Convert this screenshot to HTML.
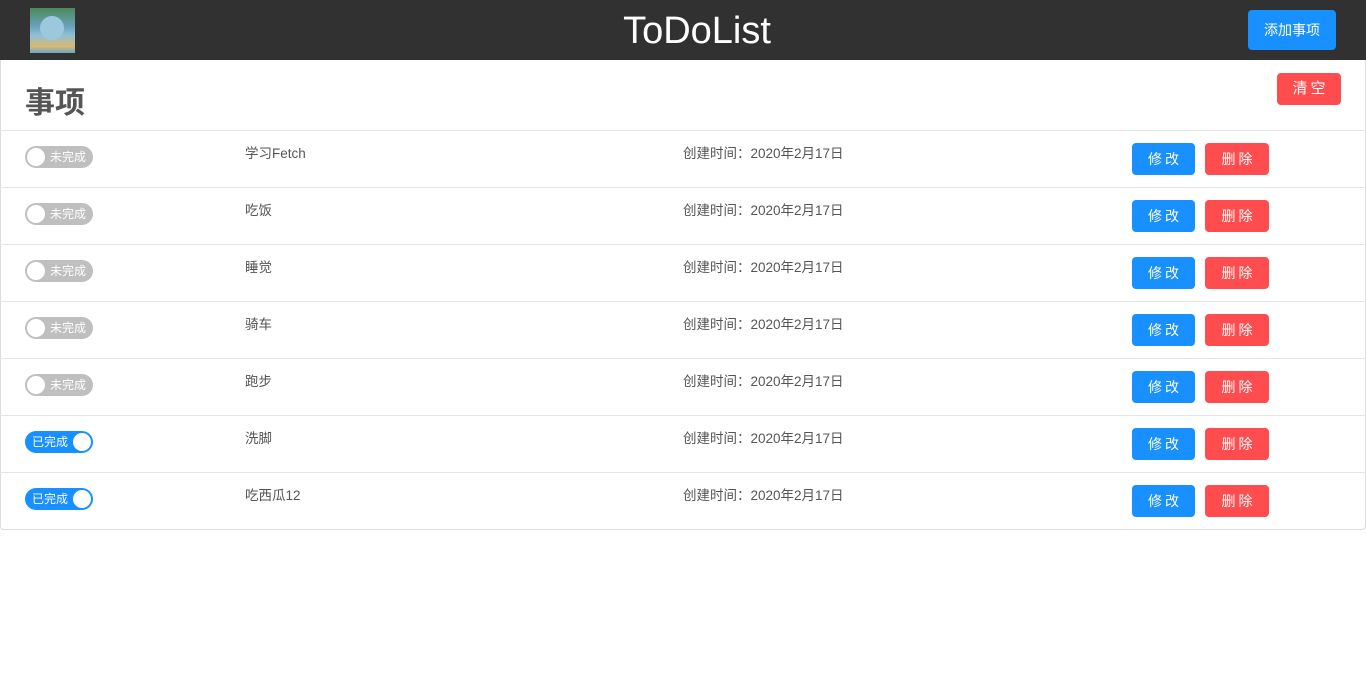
<!DOCTYPE html>
<html><head><meta charset="utf-8"><style>
*{box-sizing:border-box;margin:0;padding:0}
body{width:1366px;height:696px;background:#fff;font-family:"Liberation Sans","Noto Sans CJK SC",sans-serif;position:relative;overflow:hidden}
.hd{position:absolute;left:0;top:0;width:1366px;height:60px;background:#313131}
.logo{position:absolute;left:30px;top:8px;width:45px;height:45px;background:linear-gradient(#4a8a5a,#6aa0b8 40%,#8fc0d8 60%,#d8b870 85%,#6aa8c8);}
.logo:after{content:"";position:absolute;left:10px;top:8px;width:24px;height:24px;border-radius:50%;background:#9cc8de}
.title{position:absolute;left:0;width:1394px;text-align:center;top:8px;color:#fff;font-size:38px;line-height:46px}
.btn{position:absolute;color:#fff;font-size:14px;border-radius:4px;text-align:center;letter-spacing:3px;padding-left:3px}
.blue{background:#1890ff}.red{background:#ff4d4f}
.card{position:absolute;left:0;top:60px;width:1366px;height:470px;border:1px solid #ddd;border-top:none;border-radius:0 0 4px 4px}
.h{position:absolute;left:25px;top:78px;font-size:30px;font-weight:bold;color:#555}
.row{position:absolute;left:0;width:1366px;height:57px;border-top:1px solid #e5e5e5}
.sw{position:absolute;left:25px;top:15px;width:68px;height:22px;border-radius:11px;font-size:12px;color:#fff;line-height:22px}
.sw.off{background:#bfbfbf;padding-left:25px}
.sw.on{background:#1890ff;padding-left:7px}
.sw i{position:absolute;top:2px;width:18px;height:18px;border-radius:50%;background:#fff}
.sw.off i{left:2px}.sw.on i{right:2px}
.t{position:absolute;top:14px;font-size:13.5px;color:#555;line-height:18px}
</style></head><body>
<div class="hd"><div class="logo"></div><div class="title">ToDoList</div>
<div class="btn blue" style="left:1248px;top:10px;width:88px;height:40px;line-height:40px;letter-spacing:0;padding:0">添加事项</div></div>
<div class="card"></div>
<div class="h">事项</div>
<div class="btn red" style="left:1277px;top:73px;width:64px;height:32px;line-height:32px;font-size:15px">清空</div>
<div id="rows"></div>
<script>
var d=[["学习Fetch",0],["吃饭",0],["睡觉",0],["骑车",0],["跑步",0],["洗脚",1],["吃西瓜12",1]],h="";
d.forEach(function(r,i){var y=130+i*57;
h+='<div class="row" style="top:'+y+'px"><div class="sw '+(r[1]?'on':'off')+'"><i></i>'+(r[1]?'已完成':'未完成')+'</div><div class="t" style="left:245px">'+r[0]+'</div><div class="t" style="left:683px">创建时间：2020年2月17日</div><div class="btn blue" style="left:1132px;top:12px;width:63px;height:32px;line-height:32px">修改</div><div class="btn red" style="left:1205px;top:12px;width:64px;height:32px;line-height:32px">删除</div></div>';});
document.getElementById('rows').innerHTML=h;
</script>
</body></html>
